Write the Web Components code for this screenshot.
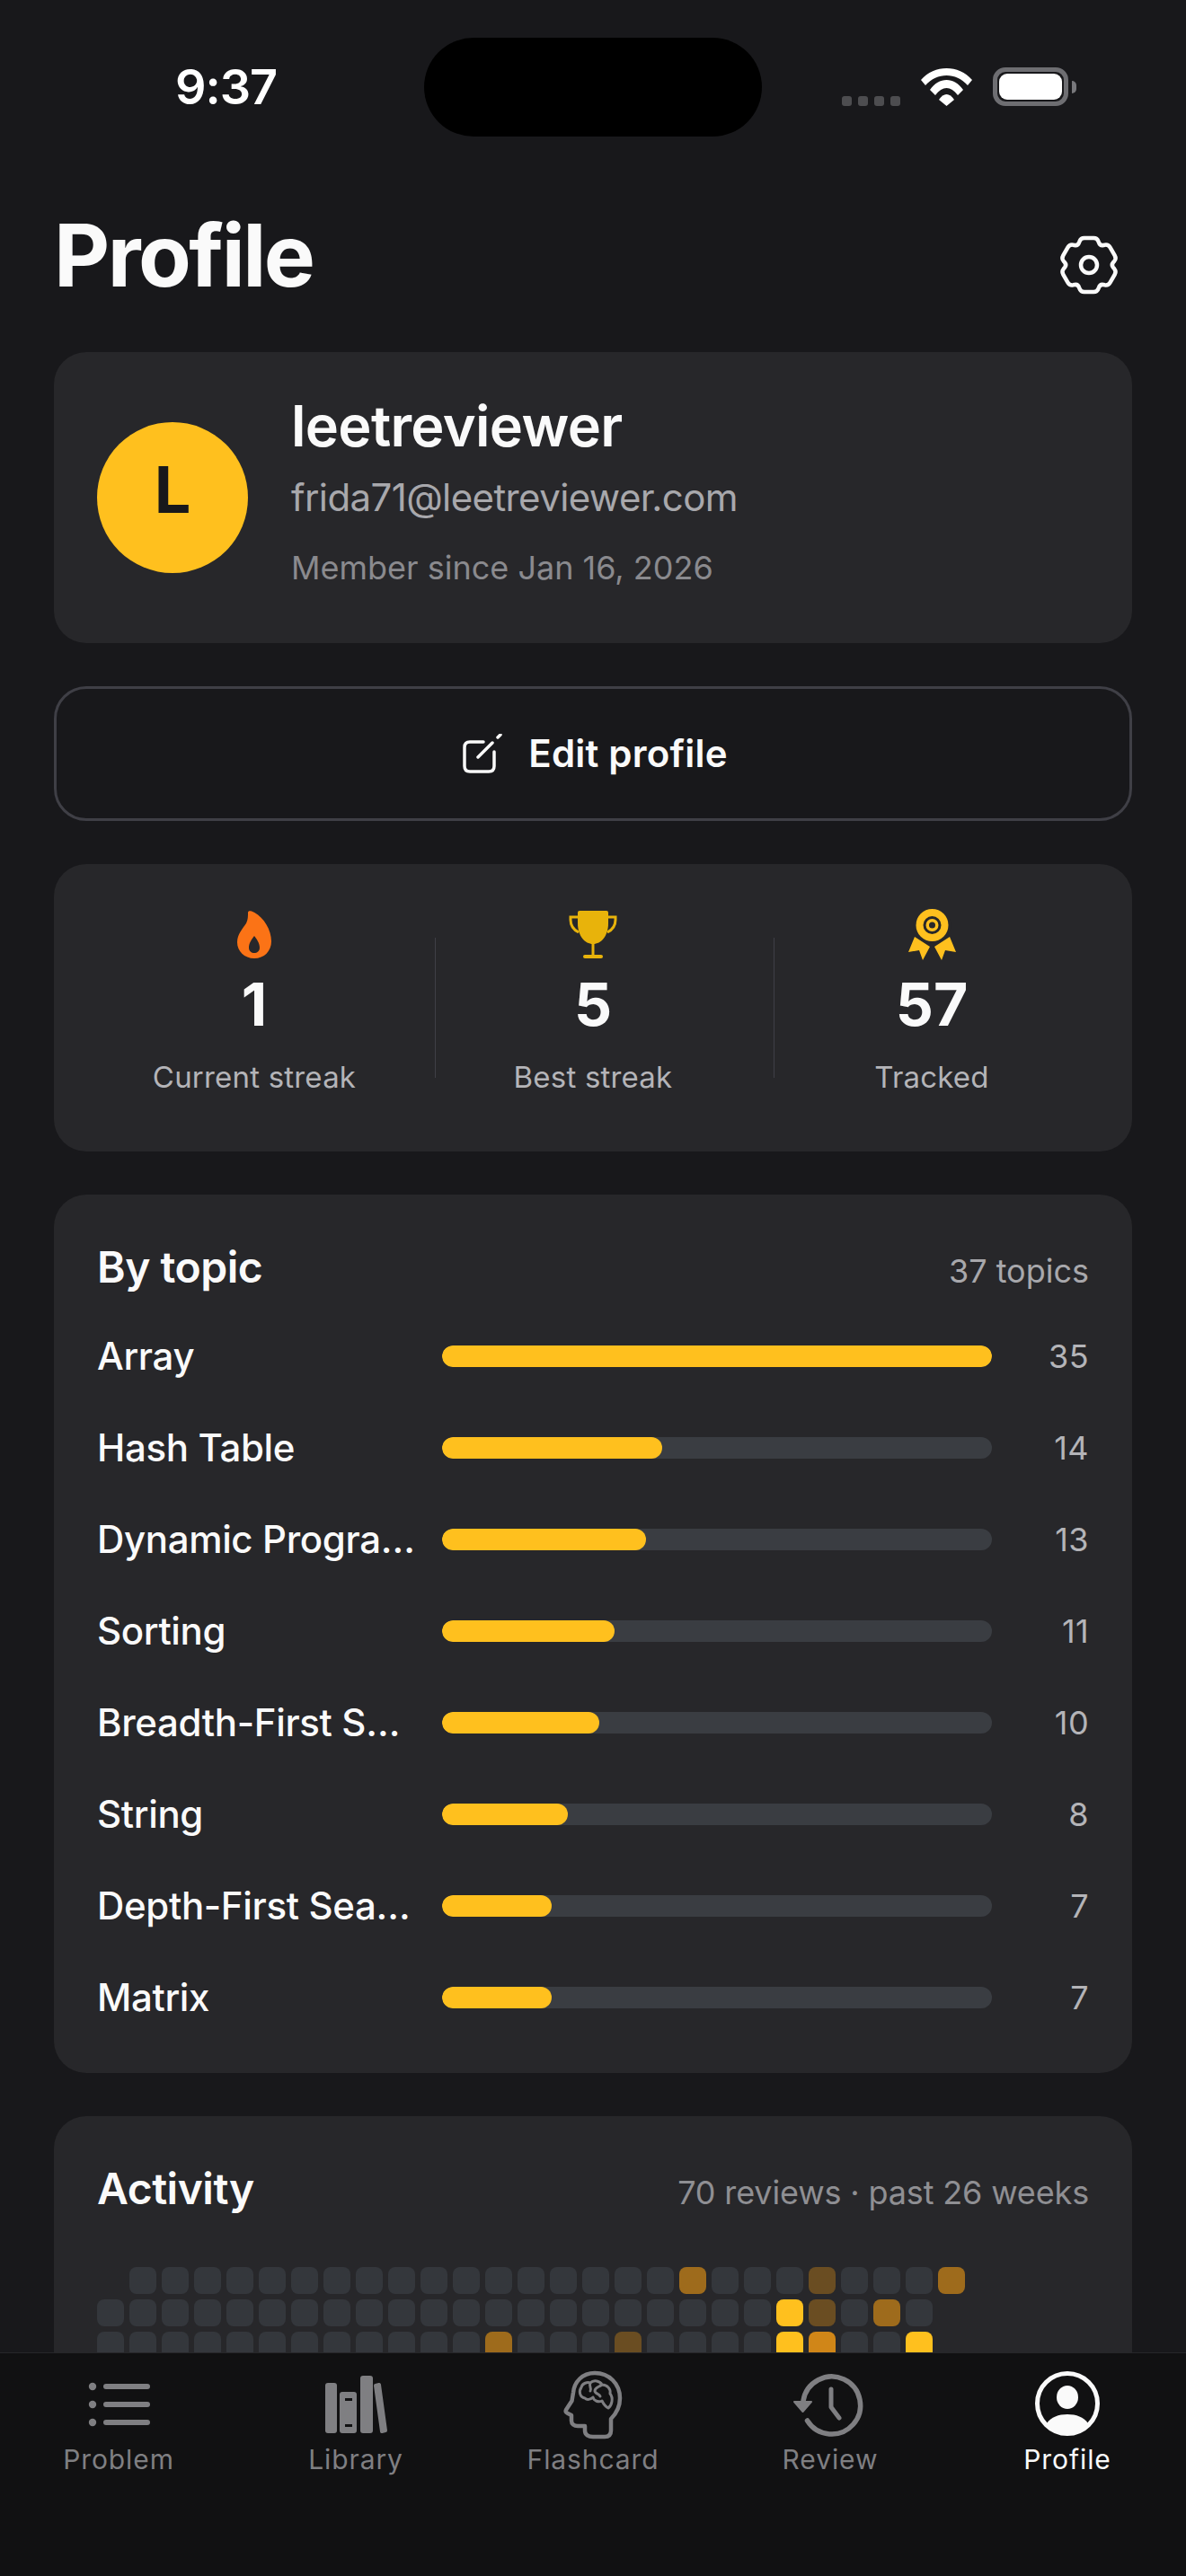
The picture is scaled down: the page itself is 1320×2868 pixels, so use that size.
<!DOCTYPE html>
<html lang="en">
<head>
<meta charset="utf-8">
<title>Profile</title>
<style>
  html, body { margin: 0; height: 2868px; overflow: hidden; background: #18181b; }
  body { font-family: Inter, "Liberation Sans", sans-serif; color: #fafafa; }
  .stack { display: flex; flex-direction: column; gap: 48px; padding: 0 60px; }
</style>
</head>
<body>
<app-shell>
  <status-bar slot="top" time="9:37"></status-bar>
  <div class="stack">
    <page-title title="Profile"></page-title>
    <profile-card name="leetreviewer" email="frida71@leetreviewer.com" since="Member since Jan 16, 2026" initial="L"></profile-card>
    <edit-button>Edit profile</edit-button>
    <stats-card>
      <stat-item icon="flame" value="1" label="Current streak"></stat-item>
      <stat-item icon="trophy" value="5" label="Best streak"></stat-item>
      <stat-item icon="medal" value="57" label="Tracked"></stat-item>
    </stats-card>
    <topics-card count="37 topics">
      <topic-row name="Array" value="35"></topic-row>
      <topic-row name="Hash Table" value="14"></topic-row>
      <topic-row name="Dynamic Progra…" value="13"></topic-row>
      <topic-row name="Sorting" value="11"></topic-row>
      <topic-row name="Breadth-First S…" value="10"></topic-row>
      <topic-row name="String" value="8"></topic-row>
      <topic-row name="Depth-First Sea…" value="7"></topic-row>
      <topic-row name="Matrix" value="7"></topic-row>
    </topics-card>
    <activity-card summary="70 reviews · past 26 weeks"></activity-card>
  </div>
  <tab-bar slot="bottom">
    <tab-item icon="list" label="Problem"></tab-item>
    <tab-item icon="books" label="Library"></tab-item>
    <tab-item icon="brain" label="Flashcard"></tab-item>
    <tab-item icon="history" label="Review"></tab-item>
    <tab-item icon="person" label="Profile" active></tab-item>
  </tab-bar>
</app-shell>

<script>
const YELLOW = '#ffc01e';

function shadow(el, html) {
  el.attachShadow({ mode: 'open' }).innerHTML = html;
}

// six lobed gear, corners rounded by cutting each vertex
function gearPath(cx, cy) {
  const pts = [];
  for (let i = 0; i < 6; i++) {
    const a = i * 60 - 90;
    [[31.5, a - 17], [31.5, a + 17], [24.5, a + 30]].forEach(([r, d]) => {
      const t = d * Math.PI / 180;
      pts.push([cx + r * Math.cos(t), cy + r * Math.sin(t)]);
    });
  }
  const cut = (p, q, d) => {
    const l = Math.hypot(q[0] - p[0], q[1] - p[1]);
    return [p[0] + (q[0] - p[0]) * d / l, p[1] + (q[1] - p[1]) * d / l];
  };
  let d = '';
  pts.forEach((p, i) => {
    const prev = pts[(i + pts.length - 1) % pts.length];
    const next = pts[(i + 1) % pts.length];
    const a = cut(p, prev, 4), b = cut(p, next, 4);
    d += (i ? 'L' : 'M') + a[0].toFixed(1) + ' ' + a[1].toFixed(1) +
      'Q' + p[0].toFixed(1) + ' ' + p[1].toFixed(1) + ' ' + b[0].toFixed(1) + ' ' + b[1].toFixed(1);
  });
  return d + 'Z';
}

const STAT_ICONS = {
  flame: `<svg width="38" height="53" viewBox="0 0 38 53"><path fill="#fb7316" fill-rule="evenodd" d="M12 2C12 0 14 0 16 .5 28 5 38 20 38 34 38 45 30 53 19 53 8 53 0 45 0 35 0 26 6 20 10 14 12 10 12 6 12 2ZM19 28C16 32 13 36 13 41 13 45 16 47 19 47 22 47 25 45 25 41 25 36 22 32 19 28Z"/></svg>`,
  trophy: `<svg width="54" height="53" viewBox="0 0 54 53"><g fill="#e8b30b"><path d="M10 2Q10 0 12 0H42Q44 0 44 2V14C44 28 36 37 27 37 18 37 10 28 10 14Z"/><rect x="25.5" y="35" width="3" height="15"/><rect x="16" y="49" width="22" height="4" rx="2"/></g><path fill="none" stroke="#e8b30b" stroke-width="3" d="M10 7H2V10C2 16 5 21 11 24M44 7H52V10C52 16 49 21 43 24"/></svg>`,
  medal: `<svg width="53" height="57" viewBox="0 0 53 57"><path fill="${YELLOW}" d="M7 31 0 48 12 46 16 57 24 42ZM46 31 53 48 41 46 37 57 29 42Z"/><circle cx="26.5" cy="18" r="21" fill="#27272a"/><circle cx="26.5" cy="18" r="18" fill="${YELLOW}"/><circle cx="26.5" cy="18" r="10" fill="#27272a"/><circle cx="26.5" cy="18" r="7" fill="${YELLOW}"/><circle cx="26.5" cy="18" r="3.5" fill="#27272a"/></svg>`
};

const TAB_ICONS = {
  list: `<g fill="none" stroke="currentColor" stroke-width="6" stroke-linecap="round"><path d="M22 17H68M22 37H68M22 57H68"/></g><circle cx="7" cy="17" r="4.2"/><circle cx="7" cy="37" r="4.2"/><circle cx="7" cy="57" r="4.2"/>`,
  books: `<rect x="2" y="13" width="13" height="56" rx="3"/><path fill-rule="evenodd" d="M21 23H34Q37 23 37 26V66Q37 69 34 69H21Q18 69 18 66V26Q18 23 21 23ZM24 30V33H32V30ZM24 59V62H32V59Z"/><rect x="41" y="5" width="14" height="64" rx="3"/><path stroke="currentColor" stroke-width="4" stroke-linejoin="round" d="M58 16 62 15 69 66 65 67Z"/>`,
  brain: `<g fill="none" stroke="currentColor" stroke-linejoin="round" stroke-linecap="round"><path stroke-width="4.5" d="M56 62V53C62 47 66 39 66 30 66 14 54 2 38 2 24 2 15 12 14 24L12.5 33 6 43C5 45 6 46 8 47L12 49V55C12 59 15 61 19 61H27V66C27 71 31 73 36 73H49C53 73 56 71 56 66Z"/><path stroke-width="3" d="M27 30C21 29 20 22 23 18 24 13 30 12 33 13 37 9 44 11 46 15 52 15 56 20 55 25 59 30 57 38 53 41 49 39 47 35 46 33 42 35 37 33 36 29 33 32 29 32 27 30ZM33 13C31 17 35 19 33 22M46 15C42 18 38 18 38 22 38 25 43 25 44 28"/></g>`,
  history: `<g fill="none" stroke="currentColor" stroke-linecap="round" stroke-linejoin="round"><path stroke-width="5.5" d="M6 33A32 32 0 1 1 10.5 55"/><path stroke-width="5" d="M37 20V40L46 52"/></g><path stroke="currentColor" stroke-width="2" stroke-linejoin="round" d="M-4 34H15L5.5 45Z"/>`,
  person: `<circle cx="36" cy="36" r="33.5" fill="none" stroke="currentColor" stroke-width="5"/><ellipse cx="36" cy="29" rx="12" ry="13"/><path d="M13 58C18 51 26 48 36 48 46 48 54 51 59 58 53 65 45 69 36 69 27 69 19 65 13 58Z"/>`
};

class AppShell extends HTMLElement {
  constructor() {
    super();
    shadow(this, `
    <style>
      :host { display: flex; flex-direction: column; height: 2868px; overflow: hidden; }
      main { flex: 1; min-height: 0; overflow: hidden; }
    </style>
    <slot name="top"></slot>
    <main><slot></slot></main>
    <slot name="bottom"></slot>`);
  }
}

class StatusBar extends HTMLElement {
  connectedCallback() {
    shadow(this, `
    <style>
      :host { display: flex; height: 110px; padding: 42px 0 0 195px; align-items: flex-start; }
      .time { width: 277px; margin-top: 25px; font: 600 54px/60px Inter, sans-serif; letter-spacing: -1px; color: #fff; }
      .island { width: 376px; height: 110px; border-radius: 55px; background: #000; }
      .icons { display: flex; align-items: flex-end; margin: 33px 0 0 89px; height: 43px; }
      .dots { display: flex; gap: 7px; width: 65px; margin-right: 23px; }
      .dots i { width: 11px; height: 11px; border-radius: 3px; background: #4d4d50; }
      svg { display: block; }
      .battery { display: flex; align-items: center; margin-left: 23px; }
      .shell { box-sizing: border-box; width: 84px; height: 43px; padding: 2px; border: 5px solid #6e6e72; border-radius: 14px; }
      .level { height: 100%; border-radius: 9px; background: #fff; }
      .cap { width: 5px; height: 14px; margin-left: 4px; border-radius: 0 5px 5px 0; background: #78787c; }
    </style>
    <div class="time">${this.getAttribute('time')}</div>
    <div class="island"></div>
    <div class="icons">
      <div class="dots"><i></i><i></i><i></i><i></i></div>
      <svg width="57" height="42" viewBox="0 0 57 42" fill="#fff"><path d="M0 13C15 -4.3 42 -4.3 57 13L52 19C39 4.3 18 4.3 5 19Z"/><path d="M10 24C20 9.3 37 9.3 47 24L41 30C33 19.3 24 19.3 16 30Z"/><path d="M20 35C25 27 32 27 37 35L28.5 42Z"/></svg>
      <div class="battery"><div class="shell"><div class="level"></div></div><div class="cap"></div></div>
    </div>`);
  }
}

class PageTitle extends HTMLElement {
  connectedCallback() {
    shadow(this, `
    <style>
      :host { display: flex; justify-content: space-between; align-items: flex-start; height: 192px; }
      h1 { margin: 74px 0 0; font: 700 96px/116px Inter, sans-serif; letter-spacing: -2.5px; color: #fafafa; }
      svg { display: block; margin: 107px 12px 0 0; overflow: visible; }
    </style>
    <h1>${this.getAttribute('title')}</h1>
    <svg width="72" height="72" viewBox="0 0 72 72" fill="none" stroke="#fafafa" stroke-width="4.5">
      <path d="${gearPath(36, 36)}"/><circle cx="36" cy="36" r="9"/>
    </svg>`);
  }
}

class ProfileCard extends HTMLElement {
  connectedCallback() {
    shadow(this, `
    <style>
      :host { display: flex; align-items: center; gap: 48px; height: 324px; box-sizing: border-box; padding: 0 48px; border-radius: 36px; background: #27272a; }
      .avatar { flex: none; display: flex; align-items: center; justify-content: center; box-sizing: border-box; width: 168px; height: 168px; padding-bottom: 18px; border-radius: 50%; background: ${YELLOW}; color: #18181b; font: 700 72px/1 Inter, sans-serif; }
      .info { margin-bottom: 18px; }
      .name { font: 600 63px/80px Inter, sans-serif; letter-spacing: -.7px; color: #fafafa; }
      .email { margin-top: 14px; font: 400 42px/52px Inter, sans-serif; letter-spacing: -.6px; color: #a8a8ac; }
      .since { margin-top: 28px; font: 400 36px/48px Inter, sans-serif; color: #8a8a8e; }
    </style>
    <div class="avatar">${this.getAttribute('initial')}</div>
    <div class="info">
      <div class="name">${this.getAttribute('name')}</div>
      <div class="email">${this.getAttribute('email')}</div>
      <div class="since">${this.getAttribute('since')}</div>
    </div>`);
  }
}

class EditButton extends HTMLElement {
  constructor() {
    super();
    shadow(this, `
    <style>
      :host { display: flex; align-items: center; justify-content: center; gap: 29px; height: 150px; box-sizing: border-box; padding-left: 5px; border: 3px solid #3f3f46; border-radius: 36px; font: 600 42px/1 Inter, sans-serif; letter-spacing: .2px; color: #fafafa; }
      svg { display: block; }
    </style>
    <svg width="44" height="44" viewBox="0 0 44 44" fill="none" stroke="#fafafa" stroke-width="3.5" stroke-linecap="round">
      <path d="M23 9H8Q2 9 2 15V36Q2 42 8 42H29Q35 42 35 36V20"/><path d="M17 26 33 10M39 4 42 1"/>
    </svg>
    <slot></slot>`);
  }
}

class StatsCard extends HTMLElement {
  constructor() {
    super();
    shadow(this, `
    <style>
      :host { display: flex; height: 320px; box-sizing: border-box; padding: 0 48px; border-radius: 36px; background: #27272a; }
    </style>
    <slot></slot>`);
  }
}

class StatItem extends HTMLElement {
  connectedCallback() {
    const divider = this.nextElementSibling ? '<div class="divider"></div>' : '';
    shadow(this, `
    <style>
      :host { display: flex; flex: none; }
      .col { width: 350px; flex: none; display: flex; flex-direction: column; align-items: center; padding-top: 48px; }
      .icon { height: 60px; display: flex; align-items: center; }
      .value { margin-top: 8px; font: 700 66px/80px Inter, sans-serif; color: #fafafa; }
      .label { margin-top: 19px; font: 400 33px/44px Inter, sans-serif; letter-spacing: .2px; color: #b4b4b8; }
      .divider { flex: none; width: 1px; height: 156px; margin: 82px 0 0 26px; background: #3f3f46; }
    </style>
    <div class="col">
      <div class="icon">${STAT_ICONS[this.getAttribute('icon')]}</div>
      <div class="value">${this.getAttribute('value')}</div>
      <div class="label">${this.getAttribute('label')}</div>
    </div>${divider}`);
  }
}

class CardHeader extends HTMLElement {
  connectedCallback() {
    shadow(this, `
    <style>
      :host { display: flex; justify-content: space-between; align-items: baseline; box-sizing: border-box; height: 57px; padding-top: 4px; }
      .title { font: 600 48px/57px Inter, sans-serif; letter-spacing: -.5px; color: #fafafa; }
      .note { font: 400 36px/57px Inter, sans-serif; letter-spacing: ${this.getAttribute('spacing') || 0}; color: ${this.getAttribute('tone') || '#a8a8ac'}; }
    </style>
    <div class="title">${this.getAttribute('title')}</div>
    <div class="note">${this.getAttribute('note')}</div>`);
  }
}

class TopicsCard extends HTMLElement {
  connectedCallback() {
    shadow(this, `
    <style>
      :host { display: block; box-sizing: border-box; height: 978px; padding: 48px; border-radius: 36px; background: #27272a; }
      .rows { display: flex; flex-direction: column; gap: 48px; margin-top: 48px; }
    </style>
    <card-header title="By topic" note="${this.getAttribute('count')}"></card-header>
    <div class="rows"><slot></slot></div>`);
  }
}

class TopicRow extends HTMLElement {
  connectedCallback() {
    const value = +this.getAttribute('value');
    shadow(this, `
    <style>
      :host { display: flex; align-items: center; height: 54px; }
      .name { width: 384px; flex: none; font: 500 42px/54px Inter, sans-serif; letter-spacing: -.35px; color: #fafafa; white-space: nowrap; }
      .track { width: 612px; height: 24px; flex: none; border-radius: 12px; background: #3a3d42; overflow: hidden; }
      .fill { height: 100%; width: ${value / 35 * 100}%; border-radius: 12px; background: ${YELLOW}; }
      .value { flex: 1; text-align: right; font: 400 36px/54px Inter, sans-serif; letter-spacing: .4px; color: #b4b4b8; }
    </style>
    <div class="name">${this.getAttribute('name')}</div>
    <div class="track"><div class="fill"></div></div>
    <div class="value">${value}</div>`);
  }
}

class ActivityCard extends HTMLElement {
  connectedCallback() {
    // one string per weekday row, one char per week: . none, a-c amber levels, d full
    const rows = [
      ' .................b...a...b',
      '.....................da.b.',
      '............b...a....dc..d'
    ];
    const tones = { '.': '#34373c', a: '#6a4d22', b: '#9e6b1c', c: '#d08618', d: YELLOW };
    const cells = rows.map(row => [...row].map(c =>
      c === ' ' ? '<i class="gap"></i>' : `<i style="background:${tones[c]}"></i>`).join('')
    ).map(r => `<div class="row">${r}</div>`).join('');
    shadow(this, `
    <style>
      :host { display: block; box-sizing: border-box; height: 400px; padding: 48px; border-radius: 36px; background: #27272a; }
      .grid { display: flex; flex-direction: column; gap: 6px; margin-top: 63px; }
      .row { display: flex; gap: 6px; height: 30px; }
      i { flex: none; width: 30px; height: 30px; border-radius: 8px; }
      i.gap { background: none; }
    </style>
    <card-header title="Activity" note="${this.getAttribute('summary')}" tone="#8f8f93" spacing="-.15px"></card-header>
    <div class="grid">${cells}</div>`);
  }
}

class TabBar extends HTMLElement {
  constructor() {
    super();
    shadow(this, `
    <style>
      :host { display: grid; grid-template-columns: repeat(5, 1fr); height: 248px; border-top: 1px solid #27272a; background: #111112; }
    </style>
    <slot></slot>`);
  }
}

class TabItem extends HTMLElement {
  connectedCallback() {
    const active = this.hasAttribute('active');
    shadow(this, `
    <style>
      :host { display: flex; flex-direction: column; align-items: center; padding-top: 20px; color: ${active ? '#fafafa' : '#7f7f82'}; }
      svg { display: block; overflow: visible; fill: currentColor; }
      .label { margin-top: 5px; font: 400 30px/42px Inter, sans-serif; letter-spacing: .9px; }
    </style>
    <svg width="72" height="72" viewBox="0 0 72 72">${TAB_ICONS[this.getAttribute('icon')]}</svg>
    <div class="label">${this.getAttribute('label')}</div>`);
  }
}

customElements.define('app-shell', AppShell);
customElements.define('status-bar', StatusBar);
customElements.define('page-title', PageTitle);
customElements.define('profile-card', ProfileCard);
customElements.define('edit-button', EditButton);
customElements.define('stats-card', StatsCard);
customElements.define('stat-item', StatItem);
customElements.define('card-header', CardHeader);
customElements.define('topics-card', TopicsCard);
customElements.define('topic-row', TopicRow);
customElements.define('activity-card', ActivityCard);
customElements.define('tab-bar', TabBar);
customElements.define('tab-item', TabItem);
</script>
</body>
</html>
